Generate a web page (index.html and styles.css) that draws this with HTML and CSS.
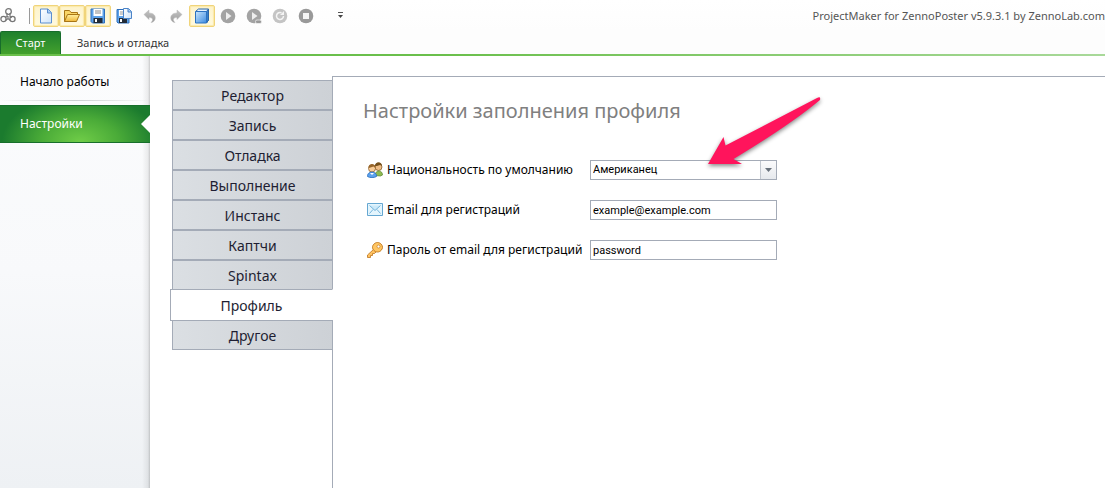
FILE: index.html
```html
<!DOCTYPE html>
<html lang="ru">
<head>
<meta charset="utf-8">
<title>ProjectMaker for ZennoPoster</title>
<link rel="stylesheet" href="styles.css">
</head>
<body>
<svg class="defs" width="0" height="0" aria-hidden="true">
  <defs>
    <linearGradient id="blue" x2="1" y2="1"><stop offset="0" stop-color="#c9e6fd"/><stop offset="1" stop-color="#3c8be0"/></linearGradient>
    <linearGradient id="paper" x2="1" y2="1"><stop offset="0" stop-color="#fff"/><stop offset="1" stop-color="#cfe4fa"/></linearGradient>
    <linearGradient id="gold" x2="0" y2="1"><stop offset="0" stop-color="#fff0a0"/><stop offset="1" stop-color="#f0b83a"/></linearGradient>
    <linearGradient id="gray" x2="0" y2="1"><stop offset="0" stop-color="#c4c4c4"/><stop offset="1" stop-color="#9a9a9a"/></linearGradient>
  </defs>
</svg>
<header class="titlebar">
  <svg class="logo" width="17" height="17" viewBox="0 0 17 17" fill="none" stroke="#777" stroke-width="1.300">
    <circle cx="8.500" cy="4.500" r="2.800"/><circle cx="3.500" cy="12" r="2.600"/><circle cx="12.500" cy="12" r="2.600"/>
    <path d="M7 6v3.500l-2 1M10 6v3.500l2 1M5.500 13.500l2.500-2 2.500 2M8 9v2.500" stroke-width="1.200"/>
  </svg>
  <span class="divider"></span>
  <div class="tools">
    <button class="tool active" aria-label="Новый"><svg width="16" height="16" viewBox="0 0 16 16"><path d="M2.500 1h7.500l3.500 3.500v10.500h-11z" fill="url(#paper)" stroke="#5b8ed0"/><path d="M9.500 1v4h4" fill="#a5cbf4" stroke="#5b8ed0"/></svg></button>
    <button class="tool active" aria-label="Открыть"><svg width="16" height="16" viewBox="0 0 16 16"><path d="M.5 13.500v-11h5l1.500 2h6.500v3" fill="#f9d566" stroke="#a87514"/><path d="M.5 13.500l3-7h12l-3 7z" fill="url(#gold)" stroke="#a87514"/></svg></button>
    <button class="tool active" aria-label="Сохранить"><svg width="16" height="16" viewBox="0 0 16 16"><path d="M1 1h13.500v14h-12l-1.500-1.500z" fill="#5fa3ea" stroke="#2f70bd"/><path d="M3.500 1h9v7h-9z" fill="#fff"/><path d="M5 3h6M5 5h6" stroke="#888"/><path d="M3.500 10h9v5h-9z" fill="#222c38"/><path d="M5 11h2v3h-2z" fill="#fff"/></svg></button>
    <button class="tool" aria-label="Сохранить как"><svg width="16" height="16" viewBox="0 0 16 16"><path d="M1 1.500h12v13.500h-11l-1-1z" fill="#5fa3ea" stroke="#2f70bd"/><path d="M3 2h5v6h-5z" fill="#fff"/><path d="M4 4h3M4 6h3" stroke="#999"/><path d="M3 10h8v5h-8z" fill="#222c38"/><path d="M4 11h2v3h-2z" fill="#fff"/><path d="M7.500.5h5l3 3v7h-8z" fill="url(#paper)" stroke="#4d85c8"/><path d="M12 .5v3.500h3.500" fill="#a5cbf4" stroke="#4d85c8"/></svg></button>
    <button class="tool" aria-label="Отменить"><svg width="16" height="16" viewBox="0 0 16 16"><path d="M2 6.500l5-4.500v3c5 0 7 3 6 6.500-.5 1.500-2 3-4 3 3-3 1.500-5-2-5v2z" fill="url(#gray)" stroke="#bbb" stroke-width=".5"/></svg></button>
    <button class="tool" aria-label="Повторить"><svg width="16" height="16" viewBox="0 0 16 16"><path d="M14 6.500l-5-4.500v3c-5 0-7 3-6 6.500.5 1.500 2 3 4 3-3-3-1.500-5 2-5v2z" fill="url(#gray)" stroke="#bbb" stroke-width=".5"/></svg></button>
    <button class="tool active" aria-label="Панель"><svg width="16" height="16" viewBox="0 0 16 16"><path d="M1.500 3.500l3-2.500h10v11l-2 3" fill="#e6f3fe" stroke="#2b66a8"/><path d="M12.500 3.500l2-2.500v11l-2 3z" fill="#377fca" stroke="#2b66a8"/><path d="M1.500 3.500h11v11.500h-11z" fill="url(#blue)" stroke="#2b72c2"/></svg></button>
    <button class="tool" aria-label="Старт"><svg width="16" height="16" viewBox="0 0 16 16"><circle cx="8" cy="8" r="7.300" fill="#a3a3a3"/><path d="M6 4l5.500 4-5.500 4z" fill="#eee"/></svg></button>
    <button class="tool" aria-label="Шаг"><svg width="16" height="16" viewBox="0 0 16 16"><circle cx="8" cy="8" r="7.300" fill="#a3a3a3"/><path d="M6 4l5.500 4-5.500 4z" fill="#eee"/><rect x="9.500" y="12" width="6" height="3.500" rx="1.500" fill="#999" stroke="#f5f5f5" stroke-width=".7"/></svg></button>
    <button class="tool" aria-label="Перезапуск"><svg width="16" height="16" viewBox="0 0 16 16"><circle cx="8" cy="8" r="7.300" fill="#c4c4c4"/><path d="M11.500 8a3.500 3.500 0 1 1-2-3.200" fill="none" stroke="#f4f4f4" stroke-width="1.500"/><path d="M12 3v4h-4z" fill="#f4f4f4"/></svg></button>
    <button class="tool" aria-label="Стоп"><svg width="16" height="16" viewBox="0 0 16 16"><circle cx="8" cy="8" r="7.300" fill="#999"/><path d="M5 5h6v6h-6z" fill="#f4f4f4"/></svg></button>
  </div>
  <button class="more" aria-label="Настроить панель"><svg width="7" height="7" viewBox="0 0 7 7"><path d="M1 .5h5" stroke="#555"/><path d="M1 3h5l-2.500 3z" fill="#444"/></svg></button>
  <div class="caption">ProjectMaker for ZennoPoster v5.9.3.1 by ZennoLab.com</div>
</header>
<nav class="ribbon">
  <button class="ribbon-tab selected">Старт</button>
  <button class="ribbon-tab">Запись и отладка</button>
</nav>
<div class="workspace">
  <aside class="sidebar">
    <button class="side-item">Начало работы</button>
    <button class="side-item selected">Настройки</button>
  </aside>
  <main class="content">
    <nav class="sections">
      <button class="section">Редактор</button>
      <button class="section">Запись</button>
      <button class="section">Отладка</button>
      <button class="section">Выполнение</button>
      <button class="section">Инстанс</button>
      <button class="section">Каптчи</button>
      <button class="section">Spintax</button>
      <button class="section current">Профиль</button>
      <button class="section">Другое</button>
    </nav>
    <section class="panel">
      <h1>Настройки заполнения профиля</h1>
      <form class="fields">
        <svg width="16" height="16" viewBox="0 0 16 16"><circle cx="11.500" cy="5" r="3.500" fill="#efbd86" stroke="#77501c" stroke-width=".7"/><path d="M8 4c0-5 7-5 7 0l-2-1-3 1z" fill="#75501c"/><path d="M8 13.500c0-6 7.500-6 7.500-.5l-2 1z" fill="#8fba50" stroke="#55842a" stroke-width=".7"/><circle cx="5" cy="6.500" r="3.500" fill="#f7cc98" stroke="#875822" stroke-width=".7"/><path d="M1.500 6c-.5-5.500 7.500-5.500 7 0l-2-1.500-3 1z" fill="#97652a"/><path d="M.5 14.500c-.5-6 9.500-6 9 0-2 1.500-7 1.500-9 0z" fill="#5ba1ed" stroke="#266bbb" stroke-width=".8"/><path d="M3 11l2 2 2-2" fill="#fff"/></svg>
        <label for="nation">Национальность по умолчанию</label>
        <div class="combo">
          <select id="nation"><option>Американец</option></select>
          <span class="combo-arrow"><svg width="7" height="4" viewBox="0 0 7 4"><path d="M0 0h7l-3.500 4z" fill="#68717b"/></svg></span>
        </div>
        <svg width="16" height="16" viewBox="0 0 16 16"><path d="M.5 1.500h15v12h-15z" fill="#e4f5fd" stroke="#65a7d1"/><path d="M2.500 3.500l5.500 5 5.500-5M2.500 11.500l3.500-4M13.500 11.500l-3.500-4" fill="#cbe9f9" stroke="#68acd6" stroke-width=".9"/></svg>
        <label for="email">Email для регистраций</label>
        <input id="email" type="text" value="example@example.com">
        <svg width="16" height="16" viewBox="0 0 16 16"><path d="M7 7l-6.500 6v2.500h3v-2h2v-2h2l2-2z" fill="#ffc260" stroke="#bd741c" stroke-width=".8"/><path d="M7 2c2-2 5-2 7 0s2 4.500 0 6.500-5 2-7 0-2-4.500 0-6.500z" fill="#ffc663" stroke="#c47d25"/><circle cx="11.500" cy="4.500" r="1.500" fill="#fff" stroke="#c47d25" stroke-width=".7"/></svg>
        <label for="pass">Пароль от email для регистраций</label>
        <input id="pass" type="text" value="password">
      </form>
    </section>
  </main>
</div>
<svg class="pointer" width="120" height="76" viewBox="0 0 120 76" aria-hidden="true"><path d="M6 69L21.500 42l2 8.500L115 3q4-2 3 2Q88 30 31.500 64l8.500 5z" fill="#ff145c"/></svg>
</body>
</html>
```
FILE: styles.css
```css
* { box-sizing: border-box; }
body {
  margin: 0;
  min-height: 100vh;
  display: flex;
  flex-direction: column;
  overflow-x: hidden;
  background: #fff;
  color: #000;
  font: 12px/16px "Noto Sans", sans-serif;
}
button, input, select { font: inherit; color: inherit; margin: 0; padding: 0; border: 0; border-radius: 0; background: none; }
svg { display: block; flex: none; }
.defs { position: absolute; }

.titlebar { display: flex; align-items: center; height: 31px; background: linear-gradient(#fff, #fdfdfd); }
.logo { margin-right: 12px; }
.divider { width: 1px; height: 16px; margin-right: 3px; background: #999; }
.tools { display: flex; }
.tool { display: flex; align-items: center; justify-content: center; width: 26px; height: 22px; border: 1px solid transparent; border-radius: 2px; }
.tool.active { border-color: #f0d47a; background: linear-gradient(#fdf3cb, #fffadf); box-shadow: inset 0 0 1px 1px #fbe9a9; }
.more { display: flex; margin-left: 18px; }
.caption { margin-left: auto; white-space: nowrap; color: #555; font-size: 11px; }

.ribbon { display: flex; height: 25px; background: #fdfdfd; border-bottom: 2px solid; border-image: linear-gradient(90deg, #6abf4b 40%, #a9d99a) 1; }
.ribbon-tab { padding: 0 16px; color: #333; font-size: 11px; }
.ribbon-tab.selected { width: 61px; padding: 0; color: #fff; background: linear-gradient(#1e802d, #43a12d); border: 1px solid #176c2b; border-bottom: 0; border-radius: 2px 2px 0 0; }

.workspace { flex: 1; display: flex; }
.sidebar { width: 150px; flex: none; padding-top: 7px; background: linear-gradient(90deg, transparent 142px, #0001 148px, #0003), linear-gradient(#fbfcfd, #f8f9fb 50%, #eef1f4); }
.side-item { display: block; width: 100%; height: 38px; padding-left: 20px; text-align: left; }
.side-item + .side-item { margin-top: 4px; }
.side-item:not(.selected) { border-bottom: 1px solid; border-image: linear-gradient(90deg, transparent, #ccd0d2, transparent) 1; }
.side-item.selected { position: relative; color: #fff; background: radial-gradient(ellipse 78px 48px at 80px 100%, #70cd48, #4aab38 50%, #1b7b2e); border-top: 1px solid #176f2b; border-bottom: 1px solid #176f2b; }
.side-item.selected::after { content: ""; position: absolute; right: 0; top: 9px; border: 9px solid transparent; border-left: 0; border-right-color: #fff; }

.content { flex: 1; display: flex; min-width: 0; padding: 20px 0 0 20px; }
.sections { width: 163px; flex: none; display: flex; flex-direction: column; align-items: flex-end; padding-top: 4px; margin-right: -1px; z-index: 1; }
.section { width: 161px; height: 30px; padding-top: 2px; border: 1px solid #a4abb7; background: linear-gradient(90deg, #dbdfe3, #cdd1d6); color: #1e1e32; font-size: 14px; line-height: 20px; }
.section.current { width: 163px; height: 32px; margin: -1px 0; background: #fff; border-right-color: #fff; }
.panel { flex: 1; min-width: 0; padding: 20px 30px; border: solid #a4abb7; border-width: 1px 0 0 1px; }
h1 { margin: 0 0 35px; color: #808080; font-size: 20px; line-height: 28px; font-weight: 400; }
.fields { display: grid; grid-template-columns: 16px 199px 187px; column-gap: 4px; row-gap: 20px; align-items: center; padding-left: 4px; }
.fields label { white-space: nowrap; }
.fields input, .combo { width: 100%; height: 20px; border: 1px solid #a4abb7; background: #fff; font-family: Roboto, "Noto Sans", sans-serif; font-size: 11px; }
.fields input { padding: 0 2px; }
.combo { display: grid; grid-template-columns: 1fr 16px; }
.combo select { grid-area: 1 / 1 / 2 / 3; appearance: none; padding: 0 18px 0 2px; }
.combo-arrow { grid-area: 1 / 2 / 2 / 3; display: flex; align-items: center; justify-content: center; pointer-events: none; border-left: 1px solid #c2c7cf; background: linear-gradient(#fbfbfc, #e6e9ed); }

.pointer { position: absolute; left: 702px; top: 95px; pointer-events: none; filter: drop-shadow(0 2px 2px #0007); }
```
